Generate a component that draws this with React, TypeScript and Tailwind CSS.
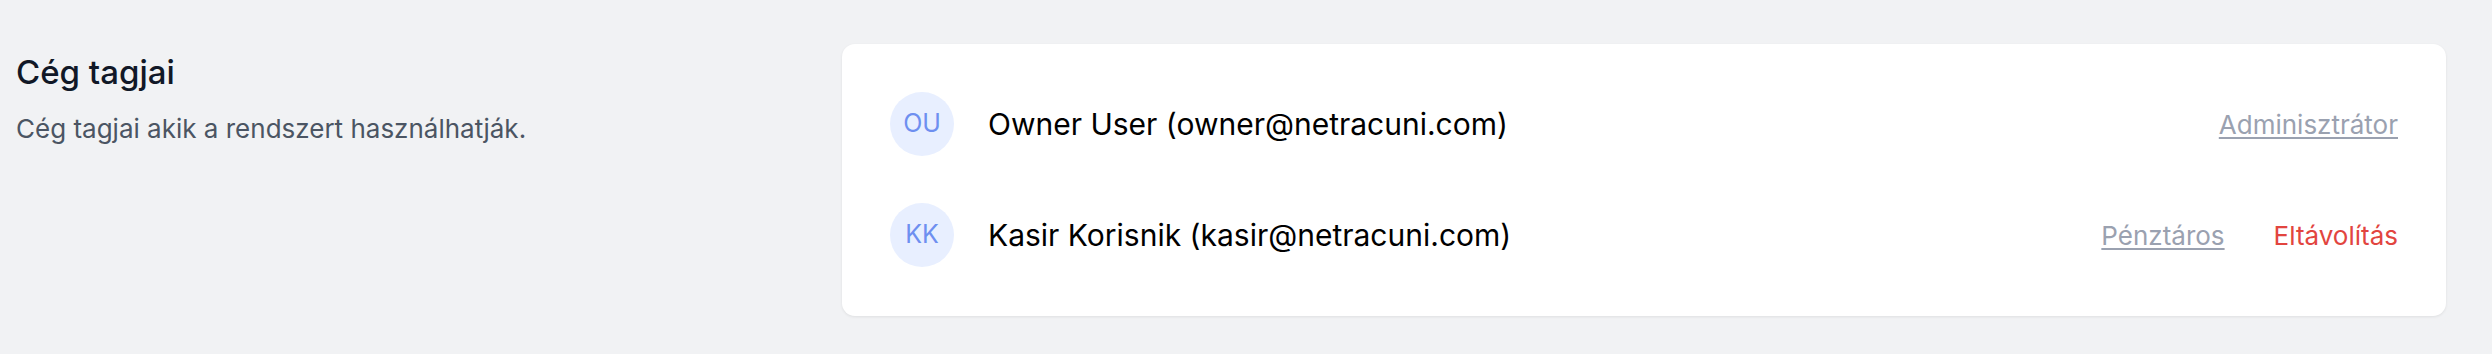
import React from "react";

const members = [
  { initials: "OU", name: "Owner User", email: "owner@netracuni.com", role: "Adminisztrátor", removable: false },
  { initials: "KK", name: "Kasir Korisnik", email: "kasir@netracuni.com", role: "Pénztáros", removable: true },
];

function App() {
  return (
    <div className="flex w-full h-[354px] bg-[#f1f2f4] pl-[16px] pr-[46px] pt-[44px] font-['Inter',sans-serif]">
      <div className="flex-1 pt-[8px]">
        <h2 className="text-[33px] leading-[40px] font-medium text-[#111827]">Cég tagjai</h2>
        <p className="mt-[21px] text-[26px] leading-[32px] text-[#4b5563]">
          Cég tagjai akik a rendszert használhatják.
        </p>
      </div>
      <div className="w-[1604px] h-[272px] bg-white rounded-[13px] shadow-[0_1px_3px_rgba(0,0,0,0.08)] px-[48px] py-[48px] flex flex-col gap-[47px]">
        {members.map((m) => (
          <div key={m.email} className="flex items-center h-[64px]">
            <div className="w-[64px] h-[64px] rounded-full bg-[#e8efff] flex items-center justify-center text-[25px] text-[#6e8ff0]">
              {m.initials}
            </div>
            <div className="ml-[34px] flex-1 text-[30px] text-black">
              {m.name} ({m.email})
            </div>
            <div className="flex items-center gap-[49px] text-[26px]">
              <a href="#" className="text-[#9aa1b0] underline decoration-2 underline-offset-[3px]">{m.role}</a>
              {m.removable && <button className="text-[#e2453f]">Eltávolítás</button>}
            </div>
          </div>
        ))}
      </div>
    </div>
  );
}

export default App;
